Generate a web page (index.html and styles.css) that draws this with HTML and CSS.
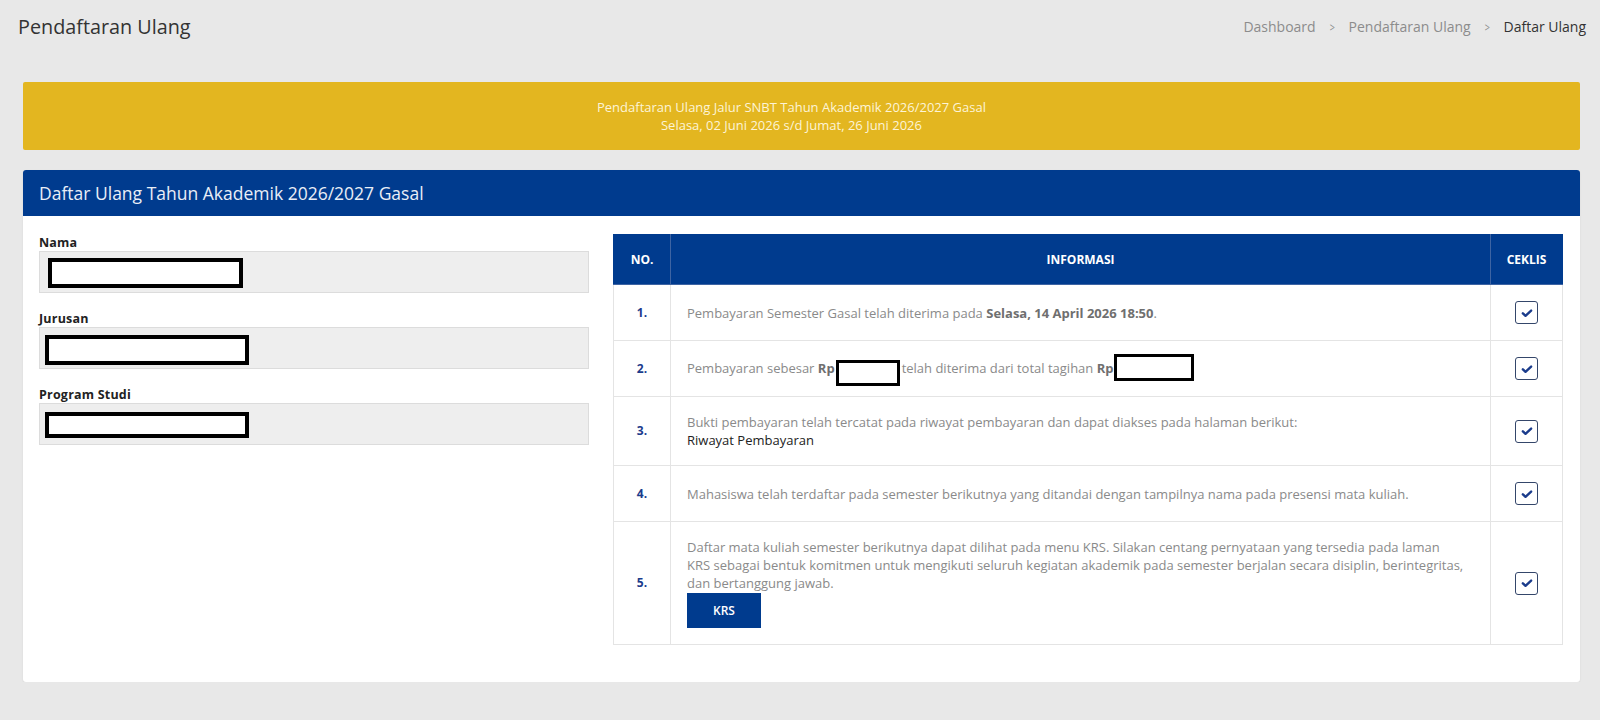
FILE: index.html
```html
<!DOCTYPE html>
<html>
  <head>
    <link rel="stylesheet" href="styles.css">
  </head>
  <body>
    <div class="page-header">
      <h1 class="page-title">Pendaftaran Ulang</h1>
      <ul class="breadcrumb">
        <li><a href="#">Dashboard</a></li>
        <li><a href="#">Pendaftaran Ulang</a></li>
        <li class="active">Daftar Ulang</li>
      </ul>
    </div>

    <div class="content">
      <div class="notice">
        Pendaftaran Ulang Jalur SNBT Tahun Akademik 2026/2027 Gasal<br>
        Selasa, 02 Juni 2026 s/d Jumat, 26 Juni 2026
      </div>

      <div class="card">
        <div class="card-header">Daftar Ulang Tahun Akademik 2026/2027 Gasal</div>
        <div class="card-body">
          <div class="student">
            <div class="field">
              <label>Nama</label>
              <div class="field-value"><span class="redact redact-nama"></span></div>
            </div>
            <div class="field">
              <label>Jurusan</label>
              <div class="field-value"><span class="redact redact-wide"></span></div>
            </div>
            <div class="field">
              <label>Program Studi</label>
              <div class="field-value"><span class="redact redact-wide redact-low"></span></div>
            </div>
          </div>

          <table class="checklist">
            <thead>
              <tr>
                <th class="col-no">NO.</th>
                <th>INFORMASI</th>
                <th class="col-check">CEKLIS</th>
              </tr>
            </thead>
            <tbody>
              <tr>
                <td class="col-no">1.</td>
                <td>Pembayaran Semester Gasal telah diterima pada <b>Selasa, 14 April 2026 18:50</b>.</td>
                <td class="col-check"><span class="checkbox"><svg viewBox="0 0 16 16" width="12" height="12"><path d="M2.5 8.5l3.5 3.2 7.5-7" fill="none" stroke="#1b3c8c" stroke-width="3.2" stroke-linecap="round" stroke-linejoin="round"/></svg></span></td>
              </tr>
              <tr>
                <td class="col-no">2.</td>
                <td>Pembayaran sebesar <b>Rp</b><span class="redact redact-amount"></span>telah diterima dari total tagihan <b>Rp</b><span class="redact redact-total"></span></td>
                <td class="col-check"><span class="checkbox"><svg viewBox="0 0 16 16" width="12" height="12"><path d="M2.5 8.5l3.5 3.2 7.5-7" fill="none" stroke="#1b3c8c" stroke-width="3.2" stroke-linecap="round" stroke-linejoin="round"/></svg></span></td>
              </tr>
              <tr>
                <td class="col-no">3.</td>
                <td>Bukti pembayaran telah tercatat pada riwayat pembayaran dan dapat diakses pada halaman berikut:<br><a href="#" class="link">Riwayat Pembayaran</a></td>
                <td class="col-check"><span class="checkbox"><svg viewBox="0 0 16 16" width="12" height="12"><path d="M2.5 8.5l3.5 3.2 7.5-7" fill="none" stroke="#1b3c8c" stroke-width="3.2" stroke-linecap="round" stroke-linejoin="round"/></svg></span></td>
              </tr>
              <tr>
                <td class="col-no">4.</td>
                <td>Mahasiswa telah terdaftar pada semester berikutnya yang ditandai dengan tampilnya nama pada presensi mata kuliah.</td>
                <td class="col-check"><span class="checkbox"><svg viewBox="0 0 16 16" width="12" height="12"><path d="M2.5 8.5l3.5 3.2 7.5-7" fill="none" stroke="#1b3c8c" stroke-width="3.2" stroke-linecap="round" stroke-linejoin="round"/></svg></span></td>
              </tr>
              <tr>
                <td class="col-no">5.</td>
                <td>Daftar mata kuliah semester berikutnya dapat dilihat pada menu KRS. Silakan centang pernyataan yang tersedia pada laman<br>KRS sebagai bentuk komitmen untuk mengikuti seluruh kegiatan akademik pada semester berjalan secara disiplin, berintegritas, dan bertanggung jawab.<br><a href="#" class="btn">KRS</a></td>
                <td class="col-check"><span class="checkbox"><svg viewBox="0 0 16 16" width="12" height="12"><path d="M2.5 8.5l3.5 3.2 7.5-7" fill="none" stroke="#1b3c8c" stroke-width="3.2" stroke-linecap="round" stroke-linejoin="round"/></svg></span></td>
              </tr>
            </tbody>
          </table>
        </div>
      </div>
    </div>
  </body>
</html>
```

FILE: styles.css
```css
body {
  margin: 0;
  background: #e8e8e8;
  font-family: "Open Sans", "Noto Sans", sans-serif;
  color: #333;
}
a {
  text-decoration: none;
}
.page-header {
  display: flex;
  justify-content: space-between;
  align-items: center;
  height: 52px;
  padding: 0 14px 0 18px;
}
.page-title {
  margin: 0;
  font-size: 19.8px;
  font-weight: 400;
  color: #333;
}
.breadcrumb {
  display: flex;
  list-style: none;
  margin: 0;
  padding: 0;
  font-size: 14px;
}
.breadcrumb a {
  color: #8c8c8c;
}
.breadcrumb li + li:before {
  content: ">";
  display: inline-block;
  transform: scaleX(0.75);
  padding: 0 13px;
  font-size: 12px;
  color: #8c8c8c;
}
.breadcrumb .active {
  color: #333;
}
.content {
  padding: 30px 20px 0 23px;
}
.notice {
  background: #e3b620;
  color: #fdf4d6;
  text-align: center;
  font-size: 13px;
  line-height: 18px;
  padding: 16px 36px 16px 16px;
  border-radius: 2px;
}
.card {
  margin-top: 20px;
  background: #fff;
  border-radius: 3px;
  box-shadow: 0 1px 2px rgba(0,0,0,0.08);
}
.card-header {
  background: #003b8e;
  color: #e9eef7;
  font-size: 17.5px;
  line-height: 46px;
  padding: 0 16px;
  border-radius: 3px 3px 0 0;
}
.card-body {
  display: grid;
  grid-template-columns: 550px 1fr;
  gap: 24px;
  align-items: start;
  padding: 18px 17px 37px 16px;
}
.field {
  margin-bottom: 17px;
}
.field label {
  display: block;
  font-size: 12.5px;
  font-weight: 700;
  letter-spacing: 0.2px;
  line-height: 17px;
  color: #222;
}
.field-value {
  box-sizing: border-box;
  height: 42px;
  background: #eeeeee;
  border: 1px solid #dcdcdc;
  padding: 6px 0 0 8px;
}
.redact {
  display: inline-block;
  box-sizing: border-box;
  background: #fff;
  border: 4px solid #000;
}
.redact-nama {
  width: 195px;
  height: 30px;
}
.redact-wide {
  width: 204px;
  height: 30px;
  margin-left: -3px;
  margin-top: 1px;
}
.redact-low {
  height: 26px;
  margin-top: 2px;
}
.checklist {
  width: 100%;
  border-collapse: collapse;
  font-size: 13px;
}
.checklist th {
  background: #003b8e;
  color: #fff;
  font-size: 12px;
  font-weight: 700;
  height: 48px;
  padding: 0 12px;
  border: 1px solid #3e64a3;
  border-top-color: #003b8e;
  text-align: center;
}
.checklist th:first-child {
  border-left-color: #003b8e;
}
.checklist th:last-child {
  border-right-color: #003b8e;
}
.checklist td {
  border: 1px solid #e4e4e4;
  padding: 16px 16px;
  line-height: 18px;
  color: #8a8a8a;
  vertical-align: middle;
}
.checklist td b {
  color: #6f6f6f;
}
.checklist .col-no {
  width: 57px;
  box-sizing: border-box;
  padding: 0;
  text-align: center;
}
td.col-no {
  color: #1b3c8c;
  font-weight: 700;
  font-size: 12px;
}
.checklist .col-check {
  width: 72px;
  box-sizing: border-box;
  padding: 16px 0;
  text-align: center;
}
.checkbox {
  display: inline-flex;
  align-items: center;
  justify-content: center;
  box-sizing: border-box;
  width: 23px;
  height: 23px;
  border: 1.5px solid #34466a;
  border-radius: 3px;
  vertical-align: middle;
}
.redact-amount {
  width: 64px;
  height: 26px;
  border-width: 3px;
  margin: -8px 2px -8px 1px;
  vertical-align: -5px;
}
.redact-total {
  width: 80px;
  height: 27px;
  border-width: 3px;
  margin: -8px 0 -8px 0;
  vertical-align: 0;
}
.link {
  color: #222;
  font-size: 13px;
}
.btn {
  display: inline-block;
  margin-top: 1px;
  width: 74px;
  line-height: 35px;
  text-align: center;
  background: #003b8e;
  color: #fff;
  font-size: 12px;
  font-weight: 600;
}
```
